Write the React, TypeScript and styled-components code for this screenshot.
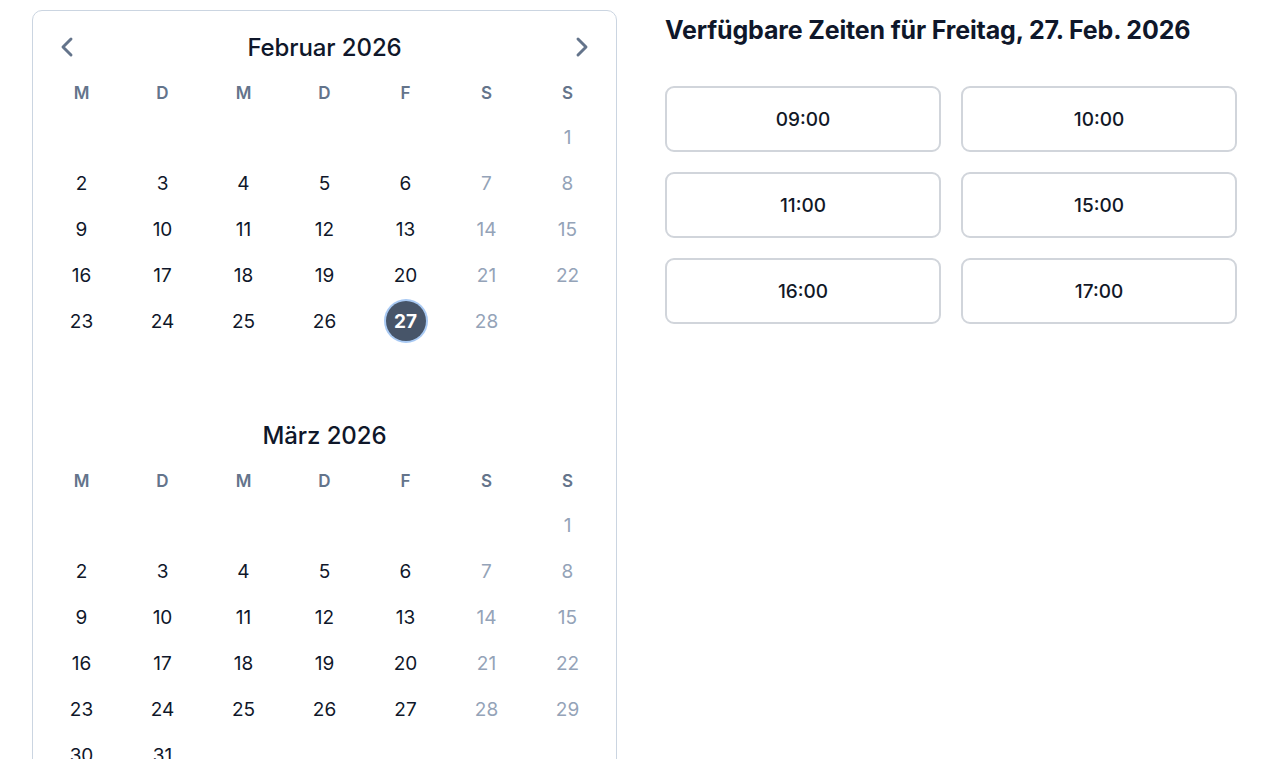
import React from "react";
import styled, { createGlobalStyle, css } from "styled-components";
import { ChevronLeft, ChevronRight } from "lucide-react";

const GlobalStyle = createGlobalStyle`
  html, body {
    margin: 0;
    padding: 0;
    background: #ffffff;
  }
  body {
    font-family: Inter, "Noto Sans", "Liberation Sans", sans-serif;
    color: #0f172a;
    overflow: hidden;
  }
`;

const Page = styled.div`
  display: grid;
  grid-template-columns: 585px 572px;
  column-gap: 48px;
  padding: 10px 0 0 32px;
  height: 759px;
  box-sizing: border-box;
  overflow: hidden;
  align-items: start;
`;

const CalendarCard = styled.div`
  border: 1px solid #cbd5e1;
  border-radius: 10px;
  padding: 14px 8px 24px;
  display: flex;
  flex-direction: column;
  gap: 23px;
`;

const Month = styled.section`
  display: flex;
  flex-direction: column;
`;

const MonthHeader = styled.div`
  height: 44px;
  display: flex;
  align-items: center;
  justify-content: space-between;
  padding: 0 8px;
  margin-bottom: 3px;
`;

const NavButton = styled.button<{ $hidden?: boolean }>`
  width: 36px;
  height: 36px;
  border: none;
  background: none;
  padding: 0;
  display: flex;
  align-items: center;
  justify-content: center;
  color: #64748b;
  cursor: pointer;
  visibility: ${(p) => (p.$hidden ? "hidden" : "visible")};
`;

const MonthTitle = styled.h2`
  margin: 0;
  font-size: 24px;
  font-weight: 500;
  color: #0f172a;
  letter-spacing: -0.1px;
`;

const WeekGrid = styled.div<{ $rowHeight: number }>`
  display: grid;
  grid-template-columns: repeat(7, 1fr);
  grid-auto-rows: ${(p) => p.$rowHeight}px;
`;

const WeekdayCell = styled.div`
  display: flex;
  align-items: center;
  justify-content: center;
  font-size: 17px;
  font-weight: 600;
  color: #64748b;
`;

const DayCell = styled.div<{ $weekend?: boolean; $selected?: boolean }>`
  display: flex;
  align-items: center;
  justify-content: center;
  font-size: 19px;
  font-weight: 400;
  color: ${(p) => (p.$weekend ? "#94a3b8" : "#0f172a")};
  ${(p) =>
    p.$selected &&
    css`
      & > span {
        width: 40px;
        height: 40px;
        border-radius: 50%;
        background: #475569;
        color: #ffffff;
        font-weight: 700;
        box-shadow: 0 0 0 2px #a8c9f3;
        display: flex;
        align-items: center;
        justify-content: center;
      }
    `}
`;

const TimesColumn = styled.div`
  padding-top: 4px;
`;

const TimesHeading = styled.h1`
  margin: 0 0 40px;
  font-size: 25px;
  line-height: 32px;
  font-weight: 700;
  color: #0f172a;
  letter-spacing: -0.15px;
`;

const SlotGrid = styled.div`
  display: grid;
  grid-template-columns: repeat(2, 1fr);
  gap: 20px;
`;

const SlotButton = styled.button`
  height: 66px;
  border: 2px solid #d1d5db;
  border-radius: 9px;
  background: #ffffff;
  font-family: inherit;
  font-size: 19px;
  font-weight: 500;
  color: #111827;
  cursor: pointer;
`;

const weekdays = ["M", "D", "M", "D", "F", "S", "S"];

interface MonthProps {
  title: string;
  offset: number;
  days: number;
  selected?: number;
  nav?: boolean;
}

const MonthView = ({ title, offset, days, selected, nav }: MonthProps) => {
  const cells: Array<number | null> = [];
  for (let i = 0; i < offset; i++) cells.push(null);
  for (let d = 1; d <= days; d++) cells.push(d);
  while (cells.length < 42) cells.push(null);

  return (
    <Month>
      <MonthHeader>
        <NavButton $hidden={!nav} aria-label="Vorheriger Monat">
          <ChevronLeft size={32} strokeWidth={2.2} />
        </NavButton>
        <MonthTitle>{title}</MonthTitle>
        <NavButton $hidden={!nav} aria-label="Nächster Monat">
          <ChevronRight size={32} strokeWidth={2.2} />
        </NavButton>
      </MonthHeader>
      <WeekGrid $rowHeight={42}>
        {weekdays.map((w, i) => (
          <WeekdayCell key={i}>{w}</WeekdayCell>
        ))}
      </WeekGrid>
      <WeekGrid $rowHeight={46}>
        {cells.map((d, i) => (
          <DayCell key={i} $weekend={i % 7 >= 5} $selected={d === selected}>
            {d !== null && <span>{d}</span>}
          </DayCell>
        ))}
      </WeekGrid>
    </Month>
  );
};

const slots = ["09:00", "10:00", "11:00", "15:00", "16:00", "17:00"];

export default function App() {
  return (
    <>
      <GlobalStyle />
      <Page>
        <CalendarCard>
          <MonthView title="Februar 2026" offset={6} days={28} selected={27} nav />
          <MonthView title="März 2026" offset={6} days={31} />
        </CalendarCard>
        <TimesColumn>
          <TimesHeading>Verfügbare Zeiten für Freitag, 27. Feb. 2026</TimesHeading>
          <SlotGrid>
            {slots.map((s) => (
              <SlotButton key={s}>{s}</SlotButton>
            ))}
          </SlotGrid>
        </TimesColumn>
      </Page>
    </>
  );
}
